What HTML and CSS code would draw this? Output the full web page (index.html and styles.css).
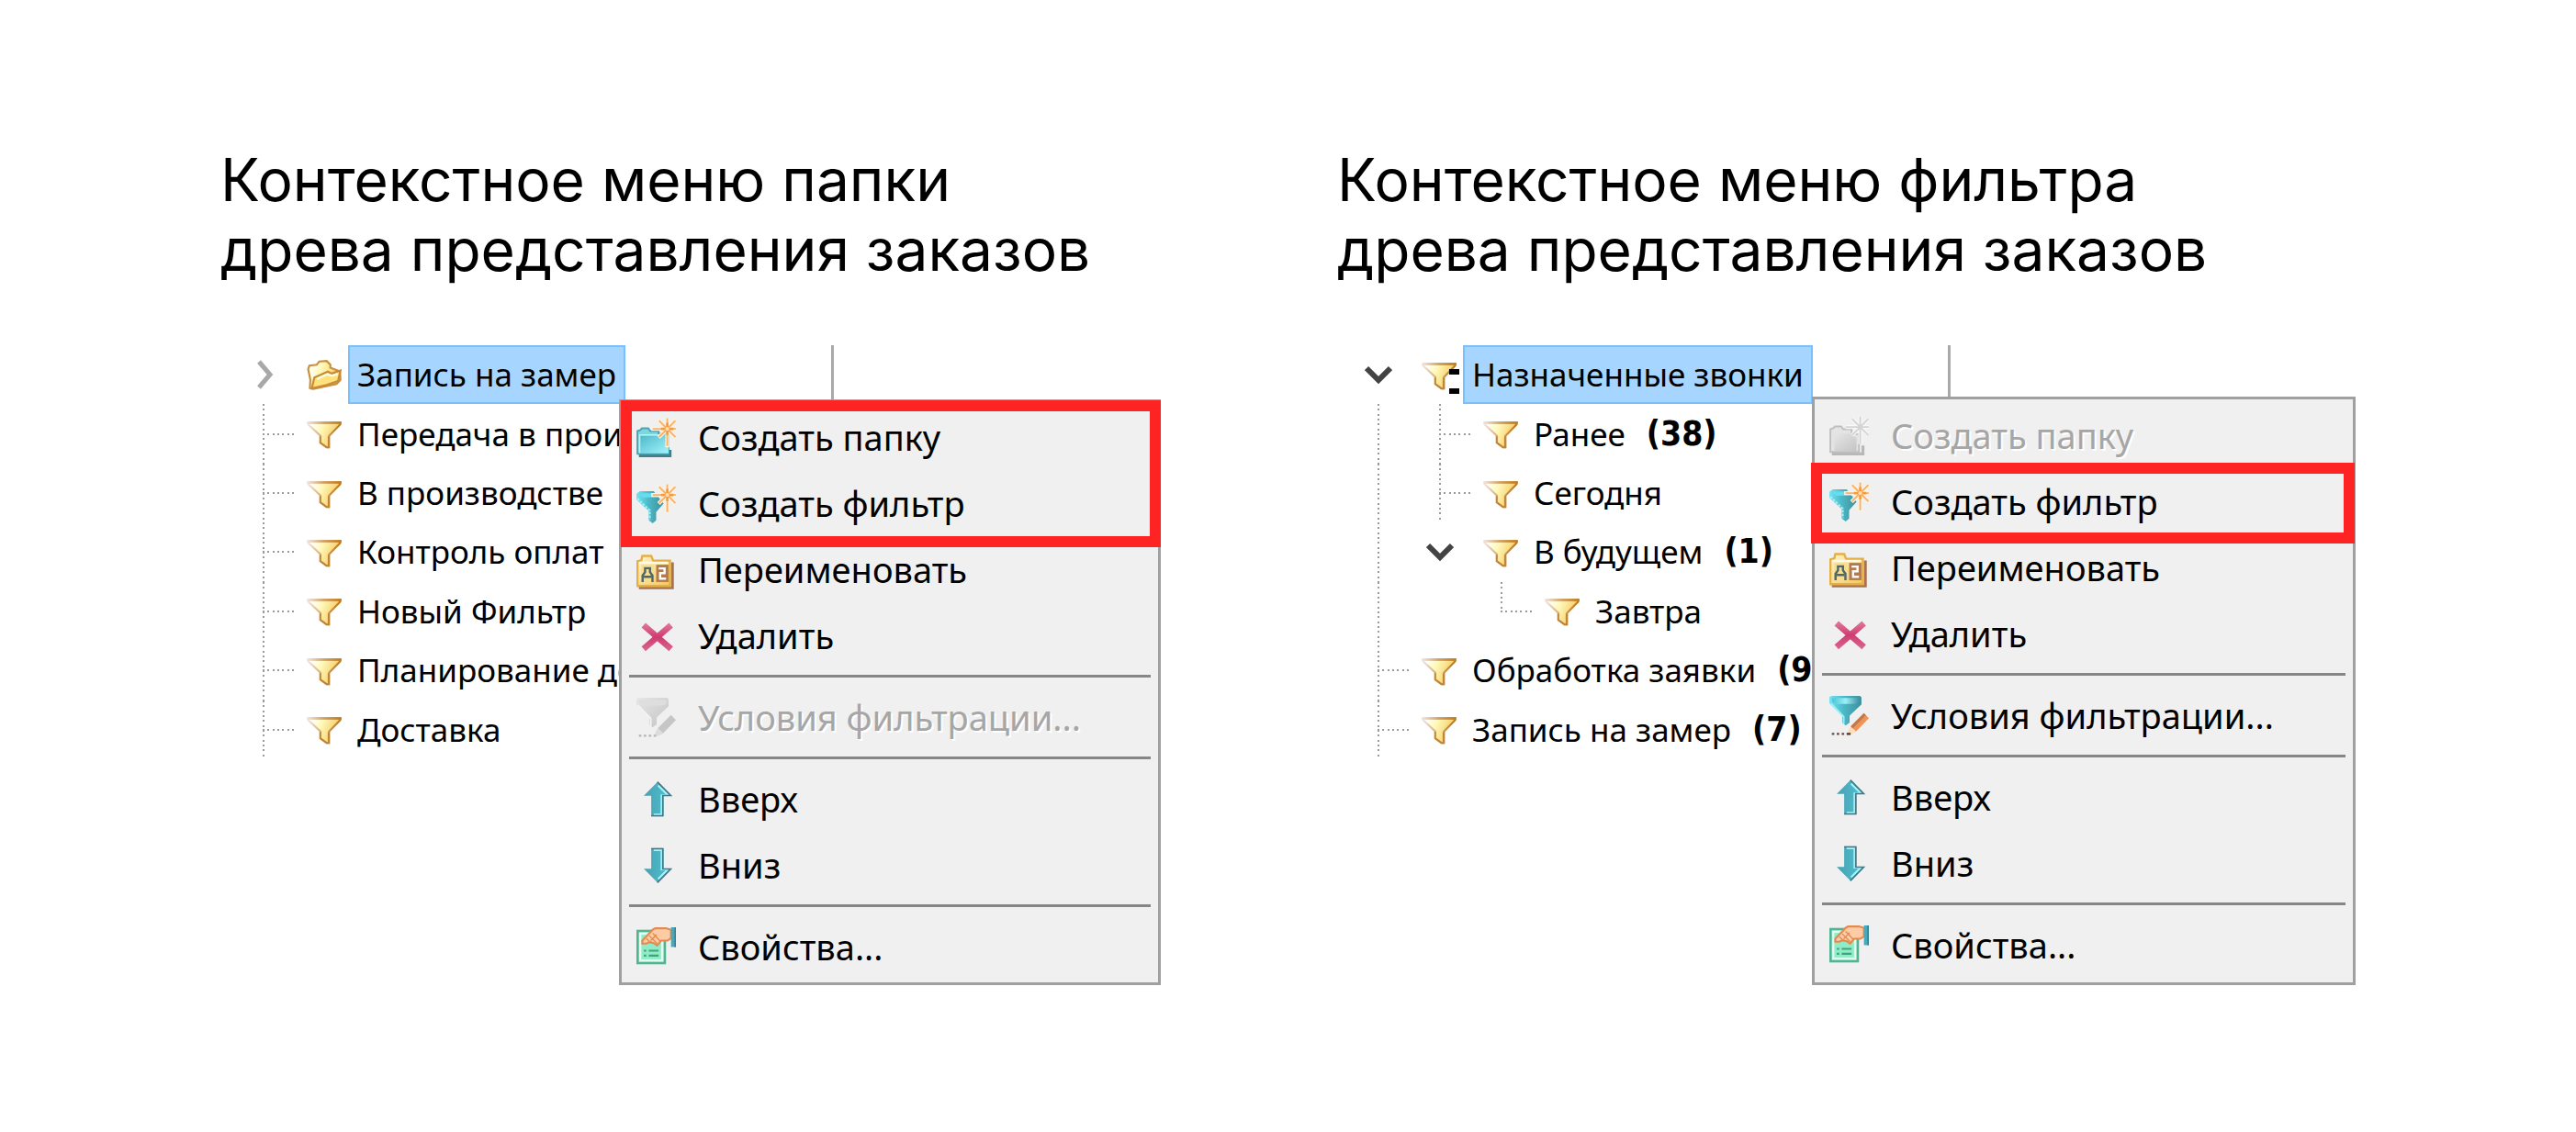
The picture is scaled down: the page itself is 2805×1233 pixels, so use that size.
FILE: index.html
```html
<!DOCTYPE html>
<html lang="ru">
<head>
<meta charset="utf-8">
<meta name="viewport" content="width=device-width, initial-scale=1">
<title>Контекстные меню древа представления заказов</title>
<link rel="stylesheet" href="styles.css">
</head>
<body>
<svg class="defs" aria-hidden="true">
  <defs>
    <linearGradient id="gold" x1="0" y1="0" x2="1" y2="0.3"><stop offset="0.1" stop-color="#fff"/><stop offset="0.45" stop-color="#fff8b8"/><stop offset="1" stop-color="#f5c860"/></linearGradient>
    <linearGradient id="goldEdge" x1="0" y1="0" x2="1" y2="0"><stop offset="0" stop-color="#f1e4dc"/><stop offset="0.5" stop-color="#d0a060"/><stop offset="1" stop-color="#bf7a1c"/></linearGradient>
    <linearGradient id="teal" x1="0" y1="0" x2="1" y2="1"><stop offset="0" stop-color="#4cb8c8"/><stop offset="1" stop-color="#a4f4fc"/></linearGradient>
    <linearGradient id="cone" x1="0" y1="0" x2="1" y2="0"><stop offset="0" stop-color="#74e4f4"/><stop offset="0.45" stop-color="#4cb8c6"/><stop offset="1" stop-color="#3f8f9c"/></linearGradient>
    <linearGradient id="rim" x1="0" y1="0" x2="1" y2="0"><stop offset="0" stop-color="#4fc3d4"/><stop offset="0.5" stop-color="#9af0fa"/><stop offset="1" stop-color="#3f94a2"/></linearGradient>
    <linearGradient id="arrow" x1="0" y1="0" x2="1" y2="0"><stop offset="0" stop-color="#4a9fb0"/><stop offset="1" stop-color="#4cc4d4"/></linearGradient>
    <linearGradient id="rose" x1="0" y1="0" x2="0" y2="1"><stop offset="0" stop-color="#e07098"/><stop offset="0.5" stop-color="#cf3d70"/><stop offset="1" stop-color="#d8608c"/></linearGradient>
    <linearGradient id="card" x1="0" y1="0" x2="1" y2="1"><stop offset="0" stop-color="#fff4cc"/><stop offset="1" stop-color="#f6c75e"/></linearGradient>
    <linearGradient id="grey" x1="0" y1="0" x2="1" y2="1"><stop offset="0" stop-color="#e6e6e6"/><stop offset="1" stop-color="#c4c4c4"/></linearGradient>
  </defs>

  <symbol id="i-filter" viewBox="0 0 14 16">
    <path d="M0.5 3.5H13.5V4.2L9 8.8V13.5H8L5.5 11.6V8.8L0.5 4.2Z" fill="url(#gold)" stroke="url(#goldEdge)" stroke-width="0.8"/>
    <path d="M0 3.1H14V4H0Z" fill="url(#goldEdge)"/>
    <path d="M5.4 9V11.6L8 13.5H8.8V9" fill="none" stroke="#c08434" stroke-width="0.7"/>
  </symbol>
  <symbol id="i-folder" viewBox="0 0 14 16">
    <path d="M0.5 5.5L1 4.2L4 3.8L5 2.5L8 2.3L9.5 3.8V5L13.4 6.5L13.6 10L12 11.6L2.6 13.6L1.2 13.3L1.4 10Z" fill="url(#gold)" stroke="#c99040" stroke-width="0.8"/>
    <path d="M2 13.4L3 9L8.5 6.6L10 7.4L13.6 6.2L12.6 10.4L8 12Z" fill="#ffe27c" stroke="#c88a34" stroke-width="0.8"/>
    <path d="M4 9.6L8.2 7.7L10.2 8.3L12.4 7.6" fill="none" stroke="#fffce8" stroke-width="0.9"/>
  </symbol>
  <symbol id="i-collapsed" viewBox="0 0 30 32"><path d="M10 2L22 16L10 30" fill="none" stroke="#a8a8a8" stroke-width="5"/></symbol>
  <symbol id="i-expanded" viewBox="0 0 30 32"><path d="M2 9L15 22L28 9" fill="none" stroke="#434343" stroke-width="6"/></symbol>

  <symbol id="star" viewBox="0 0 16 16">
    <path d="M12.5 0V12M6 4.5H16M9 1L16 8M16 1L9 8" stroke="#fff3df" stroke-width="1.6" fill="none"/>
    <path d="M12.5 0.2V11.4M6.6 4.5H16M9.2 1.2L15.8 7.8M15.8 1.2L9.2 7.8" stroke="#f7b168" stroke-width="0.7" fill="none"/>
    <path d="M12.5 2V7M10 4.5H15" stroke="#f79a3c" stroke-width="1" fill="none"/>
    <circle cx="12.5" cy="4.5" r="0.8" fill="#ffe0b0"/>
  </symbol>
  <symbol id="i-newfolder" viewBox="0 0 16 16">
    <path d="M1 15.4H13.6V13" fill="none" stroke="#41808a" stroke-width="1.2"/>
    <path d="M0.4 15V5.4L1.6 5L2.2 4.3H4.8L5.6 5.4H9V6.4H13V14.6H0.4Z" fill="#7fd5de" stroke="#4aa3b0" stroke-width="0.7"/>
    <path d="M1.2 14.4V7.2H13V14.4Z" fill="url(#teal)"/>
    <path d="M1.3 14.2V7H9" fill="none" stroke="#b4f4fa" stroke-width="0.6"/>
    <use href="#star"/>
  </symbol>
  <symbol id="i-newfolder-off" viewBox="0 0 16 16">
    <path d="M1 15.4H13.6V12" fill="none" stroke="#b8b8b8" stroke-width="1.2"/>
    <path d="M0.4 15V5.4L1.6 5L2.2 4.3H4.8L5.6 5.4H9V7.4H12V14.6H0.4Z" fill="#e4e4e4" stroke="#bfbfbf" stroke-width="0.7"/>
    <path d="M2 14.2V7.2H9L11 9V14.2Z" fill="url(#grey)"/>
    <path d="M12.5 0V11.4M6.6 4.5H16M9.2 1.2L15.8 7.8M15.8 1.2L9.2 7.8" stroke="#f8f8f8" stroke-width="1.6" fill="none"/>
    <path d="M12.5 0.2V11.4M6.6 4.5H16M9.2 1.2L15.8 7.8M15.8 1.2L9.2 7.8" stroke="#d4d4d4" stroke-width="0.7" fill="none"/>
  </symbol>
  <symbol id="i-newfilter" viewBox="0 0 16 16">
    <path d="M0 4L1.4 3H7L11 8L8 11.4V14.8L6.6 16L5 14.8V11L0 6.4Z" fill="url(#cone)"/>
    <path d="M1 3.8H7L9 5.4L2.5 5.6Z" fill="#66dcf0"/>
    <path d="M0.4 6L5.4 10.8V14.6" fill="none" stroke="#a4f0fa" stroke-width="0.8" stroke-dasharray="1 0.5"/>
    <use href="#star"/>
  </symbol>
  <symbol id="i-rename" viewBox="0 0 16 16">
    <path d="M1 15.4H14.6V5" fill="none" stroke="#a9714c" stroke-width="1.1"/>
    <path d="M0.4 14.6V4.6L2 4.2L2.4 2.4H6L6.8 4.4H13.6V14.6Z" fill="url(#card)" stroke="#e4b046" stroke-width="0.9"/>
    <path d="M1.2 5.2H12.8" stroke="#fffbe8" stroke-width="0.9"/>
    <rect x="2" y="6" width="5" height="7" fill="#f8dc90"/>
    <rect x="8" y="6" width="5" height="7" fill="#b27c50"/>
    <path d="M2.5 13V10.4L3.5 9V7.4H5.5V9L6.5 10.4V13M3 10.9H6" fill="none" stroke="#4c6868" stroke-width="0.9"/>
    <path d="M9 7.5H11.4V9.4H9.6V11.6H12" fill="none" stroke="#fff" stroke-width="0.9"/>
  </symbol>
  <symbol id="i-delete" viewBox="0 0 16 16">
    <path d="M2.9 3.7L14 13.3M14 3.7L2.9 13.3" stroke="url(#rose)" stroke-width="2.5"/>
  </symbol>
  <symbol id="i-cond" viewBox="0 0 16 16">
    <path d="M0 0.4L1 0H12.4L13 0.6V3.4L8.2 8V10.8L6.6 12L5.2 10.8V8L0 3Z" fill="url(#cone)"/>
    <path d="M1.2 0.8H12V2.6L10 3.3H3.4L1.2 2.6Z" fill="url(#rim)"/>
    <path d="M0.6 3L5.8 8.4V11.4" fill="none" stroke="#9af0fa" stroke-width="0.7"/>
    <path d="M14 7L16 9L10.8 14.4L8.6 12.4Z" fill="#ee9458"/>
    <path d="M14 7L14.8 7.8L9.4 13.2L8.6 12.4Z" fill="#c0784c"/>
    <path d="M8.6 12.4L10.8 14.6L8.4 15.6L7.4 14.6Z" fill="#ffdcb8"/>
    <path d="M1 15.4H7" stroke="#6a4a44" stroke-width="0.9" stroke-dasharray="1 1"/>
    <path d="M7 15.4H8.6" stroke="#5a3a34" stroke-width="0.9"/>
  </symbol>
  <symbol id="i-cond-off" viewBox="0 0 16 16">
    <path d="M0 0.4L1 0H12.4L13 0.6V3.4L8.2 8V10.8L6.6 12L5.2 10.8V8L0 3Z" fill="url(#grey)"/>
    <path d="M1.2 0.9H12V2.6L10 3.2H3.4L1.2 2.6Z" fill="#dedede"/>
    <path d="M0.6 3L5.8 8.4V11.4" fill="none" stroke="#f4f4f4" stroke-width="0.7"/>
    <path d="M14 7L16 9L10.8 14.4L8.6 12.4Z" fill="#c6c6c6"/>
    <path d="M8.6 12.4L10.8 14.6L8.4 15.6L7.4 14.6Z" fill="#dcdcdc"/>
    <path d="M1 15.4H9" stroke="#b4b4b4" stroke-width="0.9" stroke-dasharray="1 1"/>
  </symbol>
  <symbol id="i-up" viewBox="0 0 16 16">
    <path d="M8.5 1L14 6.6H11V15H6V6.6H3Z" fill="url(#arrow)"/>
    <path d="M8.8 2.4L12.8 6.4H10.2V14.3H7" fill="none" stroke="#a4f4fc" stroke-width="0.8"/>
    <path d="M8.5 1L13.9 6.5H10.7V14.7H6" fill="none" stroke="#457884" stroke-width="0.6"/>
  </symbol>
  <symbol id="i-down" viewBox="0 0 16 16">
    <path d="M8.5 15L14 9.4H11V1H6V9.4H3Z" fill="url(#arrow)"/>
    <path d="M8.8 13.6L12.8 9.6H10.2V1.8H7" fill="none" stroke="#a4f4fc" stroke-width="0.8"/>
    <path d="M8.5 15L13.9 9.5H10.7V1.3H6" fill="none" stroke="#457884" stroke-width="0.6"/>
  </symbol>
  <symbol id="i-props" viewBox="0 0 16 16">
    <rect x="0.5" y="1.5" width="11" height="13" fill="#e4fbf0" stroke="#4fb592" stroke-width="1"/>
    <rect x="2" y="3" width="8" height="10" fill="#90ecc6"/>
    <path d="M3 9.5H4M5 9.5H9M3 11.5H4M5 11.5H9" stroke="#3fa47e" stroke-width="0.8"/>
    <path d="M2.4 6.6V5.4L6.6 1L7.6 0.4H12L14 1V4.4L12.6 5.4H10L8.4 7.4L7 6.4L5.4 6L4 6.6Z" fill="#fdcca4" stroke="#e28a52" stroke-width="0.8"/>
    <path d="M4 4.6L6 6.4M5.2 3.4L8.4 6.6M6.6 2.4L9.6 5.6M5.8 5.4L8.2 3" stroke="#e28a52" stroke-width="0.5"/>
    <path d="M14 0H16V8H14Z" fill="#46aabb"/>
    <path d="M15.7 0V8" stroke="#3a7f90" stroke-width="0.6"/>
  </symbol>
</svg>

<main class="page">
  <section class="example">
    <h2 class="title">Контекстное меню папки<br>древа представления заказов</h2>
    <div class="stage">
      <ul class="tree tree-folder">
        <li class="row selected"><span class="toggle"><svg><use href="#i-collapsed"/></svg></span><svg class="icon"><use href="#i-folder"/></svg><span class="label">Запись на замер</span></li>
        <li class="row"><span class="branch"></span><svg class="icon"><use href="#i-filter"/></svg><span class="label">Передача в прои</span></li>
        <li class="row"><span class="branch"></span><svg class="icon"><use href="#i-filter"/></svg><span class="label">В производстве</span></li>
        <li class="row"><span class="branch"></span><svg class="icon"><use href="#i-filter"/></svg><span class="label">Контроль оплат</span></li>
        <li class="row"><span class="branch"></span><svg class="icon"><use href="#i-filter"/></svg><span class="label">Новый Фильтр</span></li>
        <li class="row"><span class="branch"></span><svg class="icon"><use href="#i-filter"/></svg><span class="label">Планирование до</span></li>
        <li class="row"><span class="branch"></span><svg class="icon"><use href="#i-filter"/></svg><span class="label">Доставка</span></li>
      </ul>
      <div class="menu menu-folder">
        <button class="item" type="button"><svg><use href="#i-newfolder"/></svg>Создать папку</button>
        <button class="item" type="button"><svg><use href="#i-newfilter"/></svg>Создать фильтр</button>
        <button class="item" type="button"><svg><use href="#i-rename"/></svg>Переименовать</button>
        <button class="item" type="button"><svg><use href="#i-delete"/></svg>Удалить</button>
        <hr class="sep">
        <button class="item" type="button" disabled><svg><use href="#i-cond-off"/></svg>Условия фильтрации...</button>
        <hr class="sep">
        <button class="item" type="button"><svg><use href="#i-up"/></svg>Вверх</button>
        <button class="item" type="button"><svg><use href="#i-down"/></svg>Вниз</button>
        <hr class="sep">
        <button class="item" type="button"><svg><use href="#i-props"/></svg>Свойства...</button>
        <div class="mark mark-pair"></div>
      </div>
    </div>
  </section>

  <section class="example">
    <h2 class="title">Контекстное меню фильтра<br>древа представления заказов</h2>
    <div class="stage">
      <ul class="tree tree-filter">
        <li class="row selected"><span class="toggle"><svg><use href="#i-expanded"/></svg></span><span class="equals"><svg class="icon"><use href="#i-filter"/></svg></span><span class="label">Назначенные звонки</span></li>
        <li class="row"><span class="guide"></span><span class="branch"></span><svg class="icon"><use href="#i-filter"/></svg><span class="label">Ранее</span><b class="count">(38)</b></li>
        <li class="row"><span class="guide"></span><span class="branch"></span><svg class="icon"><use href="#i-filter"/></svg><span class="label">Сегодня</span></li>
        <li class="row"><span class="guide"></span><span class="toggle"><svg><use href="#i-expanded"/></svg></span><svg class="icon"><use href="#i-filter"/></svg><span class="label">В будущем</span><b class="count">(1)</b></li>
        <li class="row"><span class="guide"></span><span class="guide blank"></span><span class="branch last"></span><svg class="icon"><use href="#i-filter"/></svg><span class="label">Завтра</span></li>
        <li class="row"><span class="branch"></span><svg class="icon"><use href="#i-filter"/></svg><span class="label">Обработка заявки</span><b class="count">(9</b></li>
        <li class="row"><span class="branch"></span><svg class="icon"><use href="#i-filter"/></svg><span class="label">Запись на замер</span><b class="count">(7)</b></li>
      </ul>
      <div class="menu menu-filter">
        <button class="item" type="button" disabled><svg><use href="#i-newfolder-off"/></svg>Создать папку</button>
        <button class="item" type="button"><svg><use href="#i-newfilter"/></svg>Создать фильтр</button>
        <button class="item" type="button"><svg><use href="#i-rename"/></svg>Переименовать</button>
        <button class="item" type="button"><svg><use href="#i-delete"/></svg>Удалить</button>
        <hr class="sep">
        <button class="item" type="button"><svg><use href="#i-cond"/></svg>Условия фильтрации...</button>
        <hr class="sep">
        <button class="item" type="button"><svg><use href="#i-up"/></svg>Вверх</button>
        <button class="item" type="button"><svg><use href="#i-down"/></svg>Вниз</button>
        <hr class="sep">
        <button class="item" type="button"><svg><use href="#i-props"/></svg>Свойства...</button>
        <div class="mark mark-single"></div>
      </div>
    </div>
  </section>
</main>
</body>
</html>
```
FILE: styles.css
```css
* { box-sizing: border-box; }

body {
  margin: 0;
  background: #fff;
  color: #000;
  font-family: "Noto Sans", "Open Sans", sans-serif;
}

.defs { position: absolute; width: 0; height: 0; }

.page {
  display: grid;
  grid-template-columns: 1fr 1fr;
  min-height: 100vh;
  padding: 158px 133px 96px 240px;
}

.title {
  margin: 0 0 66px;
  font: 400 64px/76px Inter, sans-serif;
}

.stage { position: relative; }

/* Tree */
.tree {
  display: grid;
  grid-auto-rows: 1fr;
  width: 668px;
  min-height: 451px;
  margin: 0;
  border-right: 3px solid #a8a8ad;
  list-style: none;
  font-size: 35px;
}
.tree-folder { padding: 0 0 0 32px; }
.tree-filter { padding: 0 0 0 30px; }

.row {
  display: flex;
  align-items: center;
  min-height: 64px;
  line-height: 48px;
  white-space: nowrap;
}

.icon {
  flex: none;
  display: block;
  width: 38px;
  height: 43px;
  overflow: visible;
}

.toggle { flex: none; width: 62px; }
.toggle svg { display: block; width: 30px; height: 32px; overflow: visible; }

.guide, .branch {
  --dots: #9a9a9a 0 2px, transparent 2px 5px, #9a9a9a 5px 7px, transparent 7px 11px, #9a9a9a 11px 13px, transparent 13px 16px;
  flex: none;
  align-self: stretch;
  width: 67px;
  background: repeating-linear-gradient(to bottom, var(--dots)) 14px 0 / 2px 100% no-repeat;
}
.guide.blank { background: none; }
.branch {
  width: 62px;
  background:
    repeating-linear-gradient(to bottom, var(--dots)) 14px 0 / 2px 100% no-repeat,
    repeating-linear-gradient(to right, var(--dots)) 14px 50% / 35px 2px no-repeat;
}
.branch.last {
  background:
    repeating-linear-gradient(to bottom, var(--dots)) 14px 0 / 2px 50% no-repeat,
    repeating-linear-gradient(to right, var(--dots)) 14px 50% / 35px 2px no-repeat;
}

.label {
  margin-left: 8px;
  padding: 0 9px;
}
.selected .label {
  display: flex;
  align-items: center;
  align-self: stretch;
  margin-left: 7px;
  padding: 0 8px;
  border: 2px solid #78c0ff;
  background: #a6d6ff;
}

.equals { position: relative; }
.equals::after {
  content: "";
  position: absolute;
  right: -3px;
  bottom: 1px;
  width: 11px;
  height: 15px;
  border: solid #000;
  border-width: 6px 0;
}

.count {
  margin-left: 14px;
  font-family: "DejaVu Sans Condensed", "DejaVu Sans", sans-serif;
  font-size: 37px;
  font-weight: 700;
}

/* Context menu */
.menu {
  position: absolute;
  border: 3px solid #a0a0a0;
  background: #f0f0f0;
}
.menu-folder { left: 434px; top: 59px; width: 590px; padding: 2px 0 3px; }
.menu-filter { left: 517px; top: 56px; width: 592px; padding: 3px 0 5px; }

.item {
  display: flex;
  align-items: center;
  gap: 24px;
  width: 100%;
  height: 72px;
  padding: 0 16px;
  border: 0;
  background: none;
  color: #000;
  font: inherit;
  font-size: 38px;
  line-height: 56px;
  text-align: left;
  white-space: nowrap;
}
.item:disabled { color: #a6a6a6; text-shadow: 2px 2px #fff; }
.item svg { flex: none; width: 43px; height: 43px; }

.sep {
  height: 17px;
  margin: 0 8px;
  border: 0;
  background: linear-gradient(#868686, #868686) 0 50% / 100% 3px no-repeat;
}

/* Red callout frames */
.mark {
  position: absolute;
  border: 12px solid #ff2424;
  pointer-events: none;
}
.mark-pair { inset: -2px -3px auto -1px; height: 160px; }
.mark-single { inset: 69px -2px auto -4px; height: 88px; }
```
